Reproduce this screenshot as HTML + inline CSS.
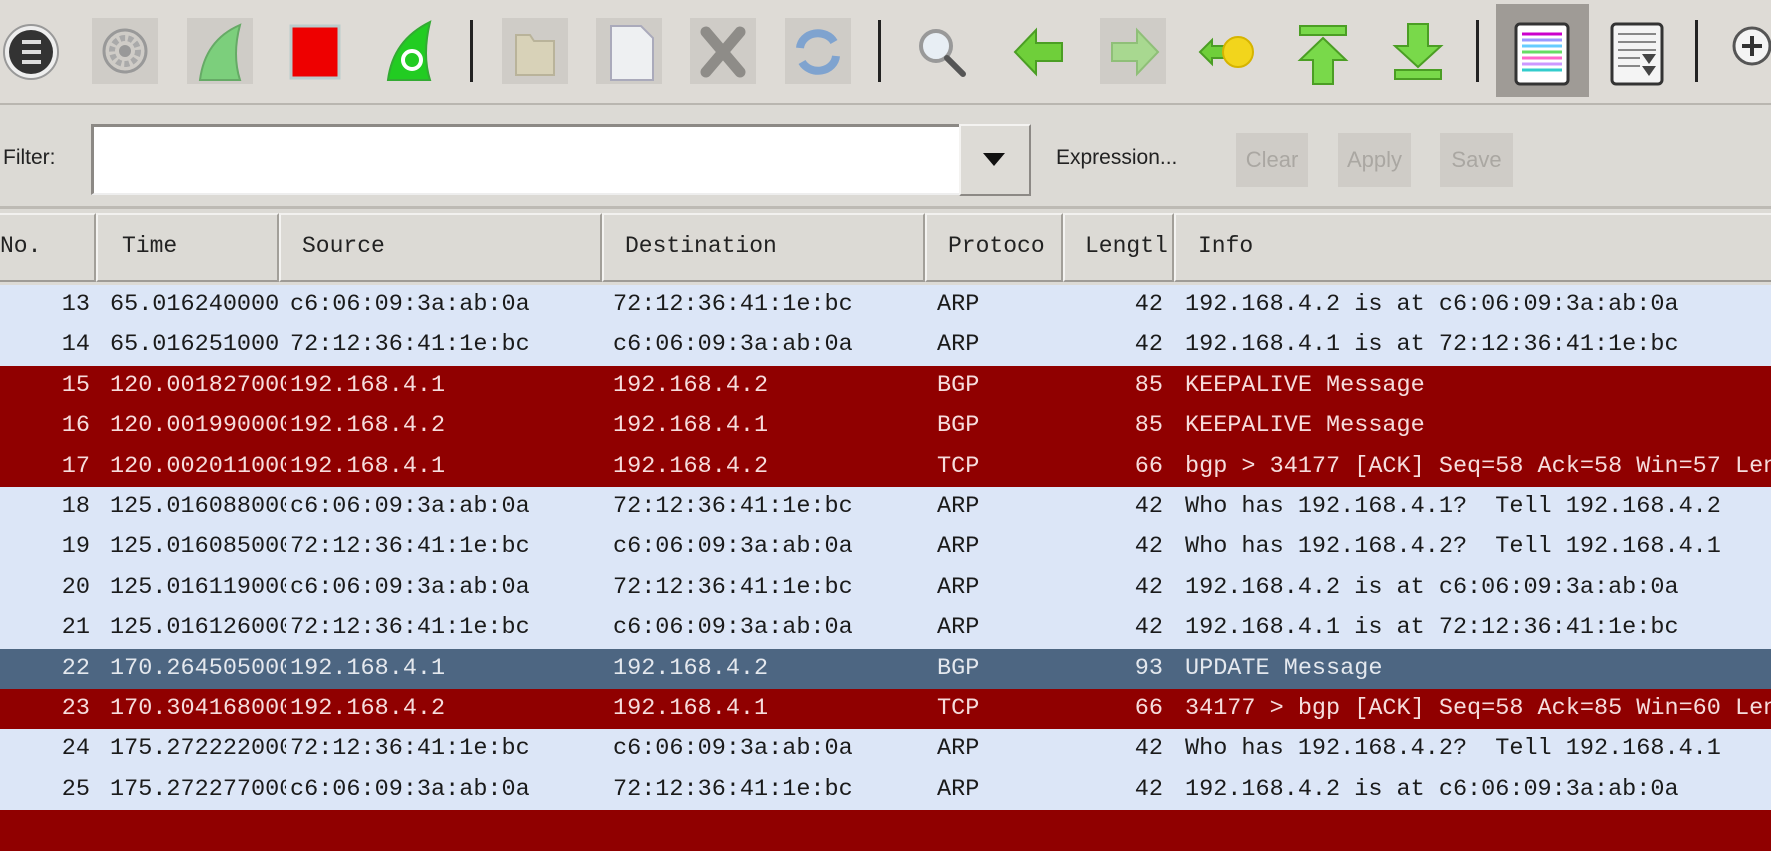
<!DOCTYPE html>
<html><head><meta charset="utf-8"><style>
*{margin:0;padding:0;box-sizing:border-box}
body{width:1771px;height:815px;overflow:hidden;background:#dcdad5;position:relative;font-family:"Liberation Sans",sans-serif}
.a{position:absolute}
.tb{left:0;top:0;width:1771px;height:105px;background:#dedbd6;border-bottom:2px solid #b9b6b0}
.fb{left:0;top:107px;width:1771px;height:102px;background:#dcdad5;border-bottom:3px solid #bdbab4}
.ib{width:66px;height:66px;top:17px;background:#cfccc7}
.sep{width:3px;height:62px;top:20px;background:#222}
.hd{top:213px;height:69px;background:#dcdad5;border-top:2px solid #f2f1ef;border-bottom:2px solid #9e9b96;border-right:2px solid #a29f99;border-left:2px solid #f4f3f1;font-family:"Liberation Mono",monospace;font-size:23px;color:#222;padding-top:18px}
.row{left:0;width:1771px;height:40.4px;font-family:"Liberation Mono",monospace;font-size:23.5px;line-height:40px;color:#1a1a1a;background:#dce6f7}
.row span{position:absolute;white-space:pre;overflow:hidden}
.r{background:#900000;color:#f6dcdc}
.s{background:#4d6682;color:#e4e8ee}
.btn{top:133px;height:54px;background:#cfccc7;color:#aaa7a2;font-size:22px;text-align:center;line-height:54px}
</style></head><body>
<div class="a tb"></div>
<!-- toolbar icons -->
<svg class="a" style="left:0;top:0" width="1771" height="105">
<circle cx="31" cy="52" r="27" fill="#eee" stroke="#999" stroke-width="2"/><circle cx="31" cy="52" r="22" fill="#333"/>
<g stroke="#ddd" stroke-width="4"><line x1="22" y1="42" x2="41" y2="42"/><line x1="22" y1="52" x2="41" y2="52"/><line x1="22" y1="62" x2="41" y2="62"/></g>
<rect x="92" y="18" width="66" height="66" fill="#cfccc7"/><circle cx="125" cy="51" r="21" fill="none" stroke="#999" stroke-width="3"/><circle cx="125" cy="51" r="13" fill="none" stroke="#aaa" stroke-width="6" stroke-dasharray="5 3"/><circle cx="125" cy="51" r="6" fill="#999"/>
<rect x="187" y="18" width="66" height="66" fill="#cfccc7"/><path d="M200 80 Q205 40 240 25 Q232 55 240 80 Z" fill="#7ccf7c" stroke="#6a6" stroke-width="2"/>
<rect x="291" y="26" width="48" height="52" fill="#e00" stroke="#bcc" stroke-width="3"/>
<path d="M388 80 Q393 40 430 22 Q422 55 430 80 Z" fill="#22cc22" stroke="#3a3" stroke-width="2"/><circle cx="412" cy="60" r="9" fill="none" stroke="#fff" stroke-width="4"/>
<rect x="470" y="20" width="3" height="62" fill="#222"/>
<rect x="502" y="18" width="66" height="66" fill="#cfccc7"/><path d="M516 35 h14 l4 6 h20 v34 h-38z" fill="#d8d2b8" stroke="#b9b39a" stroke-width="2"/>
<rect x="596" y="18" width="66" height="66" fill="#cfccc7"/><path d="M611 26 h30 l12 12 v42 h-42z" fill="#eef0f2" stroke="#aab" stroke-width="2"/>
<rect x="690" y="18" width="66" height="66" fill="#cfccc7"/><path d="M706 32 L740 72 M740 32 L706 72" stroke="#8e8c88" stroke-width="11" stroke-linecap="round"/>
<rect x="785" y="18" width="66" height="66" fill="#cfccc7"/><path d="M800 48 a18 16 0 0 1 34 -6 M836 56 a18 16 0 0 1 -34 6" fill="none" stroke="#7fa3cf" stroke-width="8"/>
<rect x="878" y="20" width="3" height="62" fill="#222"/>
<circle cx="936" cy="46" r="15" fill="#e8eef4" stroke="#999" stroke-width="4"/><line x1="947" y1="58" x2="963" y2="74" stroke="#555" stroke-width="6" stroke-linecap="round"/>
<path d="M1015 52 L1036 30 V43 H1062 V61 H1036 V74 Z" fill="#6fcf3a" stroke="#4b9e24" stroke-width="2"/>
<rect x="1100" y="30" width="66" height="66" fill="#cfccc7" transform="translate(0,-12)"/><path d="M1158 52 L1137 30 V43 H1112 V61 H1137 V74 Z" fill="#a8d890" stroke="#8fbf78" stroke-width="2"/>
<path d="M1200 52 L1212 40 V46 H1224 V58 H1212 V64 Z" fill="#6fcf3a" stroke="#4b9e24" stroke-width="2"/><circle cx="1238" cy="52" r="15" fill="#f2d51c" stroke="#d6b400" stroke-width="2"/>
<rect x="1300" y="26" width="46" height="9" fill="#79d94a" stroke="#4b9e24" stroke-width="2"/><path d="M1323 38 L1346 60 H1333 V84 H1313 V60 H1300 Z" fill="#79d94a" stroke="#4b9e24" stroke-width="2"/>
<rect x="1395" y="70" width="46" height="9" fill="#79d94a" stroke="#4b9e24" stroke-width="2"/><path d="M1418 67 L1441 46 H1428 V24 H1408 V46 H1395 Z" fill="#79d94a" stroke="#4b9e24" stroke-width="2"/>
<rect x="1476" y="20" width="3" height="62" fill="#222"/>
<rect x="1496" y="4" width="93" height="93" fill="#9f9b96"/>
<rect x="1516" y="24" width="52" height="60" rx="4" fill="#fff" stroke="#333" stroke-width="3"/>
<g stroke-width="3"><line x1="1522" y1="34" x2="1562" y2="34" stroke="#c0c"/><line x1="1522" y1="40" x2="1562" y2="40" stroke="#99f"/><line x1="1522" y1="46" x2="1562" y2="46" stroke="#6cf"/><line x1="1522" y1="52" x2="1562" y2="52" stroke="#6d6"/><line x1="1522" y1="58" x2="1562" y2="58" stroke="#f6c"/><line x1="1522" y1="64" x2="1562" y2="64" stroke="#c9f"/><line x1="1522" y1="70" x2="1562" y2="70" stroke="#3cc"/></g>
<rect x="1612" y="24" width="50" height="60" rx="4" fill="#f4f4f4" stroke="#333" stroke-width="3"/>
<g stroke="#888" stroke-width="2"><line x1="1618" y1="34" x2="1656" y2="34"/><line x1="1618" y1="42" x2="1656" y2="42"/><line x1="1618" y1="50" x2="1656" y2="50"/><line x1="1618" y1="58" x2="1640" y2="58"/><line x1="1618" y1="66" x2="1640" y2="66"/></g>
<path d="M1642 54 h14 l-7 10z M1642 66 h14 l-7 10z" fill="#444"/>
<rect x="1695" y="20" width="3" height="62" fill="#222"/>
<circle cx="1752" cy="46" r="18" fill="#f4f4f4" stroke="#555" stroke-width="3"/><path d="M1742 46 h20 M1752 36 v20" stroke="#333" stroke-width="4"/>
</svg>
<div class="a fb"></div>
<div class="a" style="left:3px;top:146px;font-size:21px;color:#222">Filter:</div>
<div class="a" style="left:91px;top:124px;width:868px;height:71px;background:#fff;border-top:3px solid #8c8985;border-left:3px solid #8c8985;border-bottom:2px solid #eee"></div>
<div class="a" style="left:959px;top:124px;width:72px;height:72px;background:#dddbd6;border:2px solid #f4f3f1;border-right-color:#8c8985;border-bottom-color:#8c8985"></div>
<svg class="a" style="left:983px;top:153px" width="22" height="14"><path d="M0 0h22L11 13z" fill="#111"/></svg>
<div class="a" style="left:1056px;top:146px;font-size:21px;color:#222">Expression...</div>
<div class="a btn" style="left:1236px;width:72px">Clear</div>
<div class="a btn" style="left:1338px;width:73px">Apply</div>
<div class="a btn" style="left:1440px;width:73px">Save</div>
<!-- header -->
<div class="a hd" style="left:-2px;width:98px;padding-left:0">No.</div>
<div class="a hd" style="left:96px;width:183px;padding-left:24px">Time</div>
<div class="a hd" style="left:279px;width:323px;padding-left:21px">Source</div>
<div class="a hd" style="left:602px;width:323px;padding-left:21px">Destination</div>
<div class="a hd" style="left:925px;width:138px;padding-left:21px">Protoco</div>
<div class="a hd" style="left:1063px;width:111px;padding-left:20px">Lengtl</div>
<div class="a hd" style="left:1174px;width:600px;padding-left:22px">Info</div>
<!-- rows -->
<div id="rows"></div>
<div class="a row" style="top:285.0px"><span style="left:40px;width:50px;text-align:right">13</span><span style="left:110px;width:176px">65.016240000</span><span style="left:290px">c6:06:09:3a:ab:0a</span><span style="left:613px">72:12:36:41:1e:bc</span><span style="left:937px">ARP</span><span style="left:1113px;width:50px;text-align:right">42</span><span style="left:1185px">192.168.4.2 is at c6:06:09:3a:ab:0a</span></div>
<div class="a row" style="top:325.4px"><span style="left:40px;width:50px;text-align:right">14</span><span style="left:110px;width:176px">65.016251000</span><span style="left:290px">72:12:36:41:1e:bc</span><span style="left:613px">c6:06:09:3a:ab:0a</span><span style="left:937px">ARP</span><span style="left:1113px;width:50px;text-align:right">42</span><span style="left:1185px">192.168.4.1 is at 72:12:36:41:1e:bc</span></div>
<div class="a row r" style="top:365.8px"><span style="left:40px;width:50px;text-align:right">15</span><span style="left:110px;width:176px">120.001827000</span><span style="left:290px">192.168.4.1</span><span style="left:613px">192.168.4.2</span><span style="left:937px">BGP</span><span style="left:1113px;width:50px;text-align:right">85</span><span style="left:1185px">KEEPALIVE Message</span></div>
<div class="a row r" style="top:406.2px"><span style="left:40px;width:50px;text-align:right">16</span><span style="left:110px;width:176px">120.001990000</span><span style="left:290px">192.168.4.2</span><span style="left:613px">192.168.4.1</span><span style="left:937px">BGP</span><span style="left:1113px;width:50px;text-align:right">85</span><span style="left:1185px">KEEPALIVE Message</span></div>
<div class="a row r" style="top:446.6px"><span style="left:40px;width:50px;text-align:right">17</span><span style="left:110px;width:176px">120.002011000</span><span style="left:290px">192.168.4.1</span><span style="left:613px">192.168.4.2</span><span style="left:937px">TCP</span><span style="left:1113px;width:50px;text-align:right">66</span><span style="left:1185px">bgp &gt; 34177 [ACK] Seq=58 Ack=58 Win=57 Len=0</span></div>
<div class="a row" style="top:487.0px"><span style="left:40px;width:50px;text-align:right">18</span><span style="left:110px;width:176px">125.016088000</span><span style="left:290px">c6:06:09:3a:ab:0a</span><span style="left:613px">72:12:36:41:1e:bc</span><span style="left:937px">ARP</span><span style="left:1113px;width:50px;text-align:right">42</span><span style="left:1185px">Who has 192.168.4.1?  Tell 192.168.4.2</span></div>
<div class="a row" style="top:527.4px"><span style="left:40px;width:50px;text-align:right">19</span><span style="left:110px;width:176px">125.016085000</span><span style="left:290px">72:12:36:41:1e:bc</span><span style="left:613px">c6:06:09:3a:ab:0a</span><span style="left:937px">ARP</span><span style="left:1113px;width:50px;text-align:right">42</span><span style="left:1185px">Who has 192.168.4.2?  Tell 192.168.4.1</span></div>
<div class="a row" style="top:567.8px"><span style="left:40px;width:50px;text-align:right">20</span><span style="left:110px;width:176px">125.016119000</span><span style="left:290px">c6:06:09:3a:ab:0a</span><span style="left:613px">72:12:36:41:1e:bc</span><span style="left:937px">ARP</span><span style="left:1113px;width:50px;text-align:right">42</span><span style="left:1185px">192.168.4.2 is at c6:06:09:3a:ab:0a</span></div>
<div class="a row" style="top:608.2px"><span style="left:40px;width:50px;text-align:right">21</span><span style="left:110px;width:176px">125.016126000</span><span style="left:290px">72:12:36:41:1e:bc</span><span style="left:613px">c6:06:09:3a:ab:0a</span><span style="left:937px">ARP</span><span style="left:1113px;width:50px;text-align:right">42</span><span style="left:1185px">192.168.4.1 is at 72:12:36:41:1e:bc</span></div>
<div class="a row s" style="top:648.6px"><span style="left:40px;width:50px;text-align:right">22</span><span style="left:110px;width:176px">170.264505000</span><span style="left:290px">192.168.4.1</span><span style="left:613px">192.168.4.2</span><span style="left:937px">BGP</span><span style="left:1113px;width:50px;text-align:right">93</span><span style="left:1185px">UPDATE Message</span></div>
<div class="a row r" style="top:689.0px"><span style="left:40px;width:50px;text-align:right">23</span><span style="left:110px;width:176px">170.304168000</span><span style="left:290px">192.168.4.2</span><span style="left:613px">192.168.4.1</span><span style="left:937px">TCP</span><span style="left:1113px;width:50px;text-align:right">66</span><span style="left:1185px">34177 &gt; bgp [ACK] Seq=58 Ack=85 Win=60 Len=0</span></div>
<div class="a row" style="top:729.4px"><span style="left:40px;width:50px;text-align:right">24</span><span style="left:110px;width:176px">175.272222000</span><span style="left:290px">72:12:36:41:1e:bc</span><span style="left:613px">c6:06:09:3a:ab:0a</span><span style="left:937px">ARP</span><span style="left:1113px;width:50px;text-align:right">42</span><span style="left:1185px">Who has 192.168.4.2?  Tell 192.168.4.1</span></div>
<div class="a row" style="top:769.8px"><span style="left:40px;width:50px;text-align:right">25</span><span style="left:110px;width:176px">175.272277000</span><span style="left:290px">c6:06:09:3a:ab:0a</span><span style="left:613px">72:12:36:41:1e:bc</span><span style="left:937px">ARP</span><span style="left:1113px;width:50px;text-align:right">42</span><span style="left:1185px">192.168.4.2 is at c6:06:09:3a:ab:0a</span></div>
<div class="a row r" style="top:810.2px"></div>
</body></html>
